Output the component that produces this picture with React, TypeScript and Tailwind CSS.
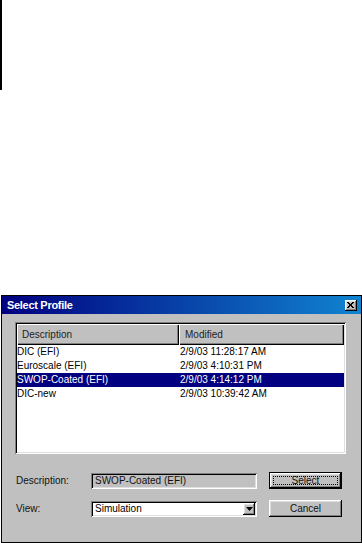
import React from 'react'

// Rows shown in the profile list
const PROFILES = [
  { name: 'DIC (EFI)', modified: '2/9/03 11:28:17 AM' },
  { name: 'Euroscale (EFI)', modified: '2/9/03 4:10:31 PM' },
  { name: 'SWOP-Coated (EFI)', modified: '2/9/03 4:14:12 PM' },
  { name: 'DIC-new', modified: '2/9/03 10:39:42 AM' },
]

const SELECTED = 2

const raised =
  'shadow-[inset_-1px_-1px_0_#000,inset_1px_1px_0_#fff,inset_-2px_-2px_0_#808080,inset_2px_2px_0_#dfdfdf]'
const sunken =
  'shadow-[inset_1px_1px_0_#808080,inset_-1px_-1px_0_#fff,inset_2px_2px_0_#000,inset_-2px_-2px_0_#dfdfdf]'

function HeaderCell({ label, className = '' }: { label: string; className?: string }) {
  return (
    <div
      className={`h-full flex items-center bg-[#c0c0c0] text-[#222] shadow-[inset_1px_1px_0_#fff,inset_-1px_-1px_0_#000,inset_-2px_-2px_0_#808080] ${className}`}
    >
      {label}
    </div>
  )
}

function Button({ label, isDefault = false }: { label: string; isDefault?: boolean }) {
  if (isDefault) {
    return (
      <div className="w-[73px] h-[17px] border border-black bg-[#c0c0c0]">
        <div className={`w-full h-full p-[3px] ${raised}`}>
          <div className="w-full h-full border border-dotted border-black flex items-center justify-center text-[#111]">
            {label}
          </div>
        </div>
      </div>
    )
  }
  return (
    <div className={`w-[73px] h-[17px] bg-[#c0c0c0] flex items-center justify-center text-[#111] ${raised}`}>
      {label}
    </div>
  )
}

export default function App() {
  return (
    <div
      className="w-[362px] h-[543px] bg-white overflow-hidden text-[10px] leading-none"
      style={{ fontFamily: '"Liberation Sans", Arial, sans-serif' }}
    >
      <div className="w-[2px] h-[90px] bg-black" />

      {/* Dialog */}
      <div className="mt-[205px] ml-[1px] w-[361px] h-[248px] border border-black bg-[#c0c0c0]">
        {/* Title bar */}
        <div className="h-[18px] flex items-center justify-between bg-[linear-gradient(to_right,#000080,#1084d0)]">
          <span className="pl-[5px] text-white font-bold text-[11px] tracking-[-0.3px]">
            Select Profile
          </span>
          <div className={`mr-[4px] w-[12px] h-[11px] bg-[#c0c0c0] flex items-center justify-center ${raised}`}>
            <svg width="7" height="6" viewBox="0 0 7 6" className="-mt-[1px] -ml-[1px]">
              <path d="M0 0L6 6M1 0L7 6M6 0L0 6M7 0L1 6" stroke="#000" strokeWidth="1" />
            </svg>
          </div>
        </div>

        <div className="pl-[13px] pt-[8px]">
          {/* List view */}
          <div className={`w-[331px] h-[132px] bg-white p-[2px] ${sunken}`}>
            <div className="h-[21px] flex">
              <HeaderCell label="Description" className="w-[162px] pl-[5px]" />
              <HeaderCell label="Modified" className="flex-1 pl-[6px]" />
            </div>
            {PROFILES.map((p, i) => (
              <div
                key={p.name}
                className={`h-[14px] flex items-center ${
                  i === SELECTED ? 'bg-[#000080] text-white' : 'text-black'
                }`}
              >
                <div className="w-[162px]">{p.name}</div>
                <div className="pl-[1px]">{p.modified}</div>
              </div>
            ))}
          </div>

          {/* Description row */}
          <div className="mt-[18px] h-[17px] flex items-center">
            <div className="w-[76px] pl-[1px] text-[#111]">Description:</div>
            <div className={`w-[166px] h-[16px] flex items-center pl-[4px] bg-[#c0c0c0] text-[#111] ${sunken}`}>
              SWOP-Coated (EFI)
            </div>
            <div className="ml-[12px]">
              <Button label="Select" isDefault />
            </div>
          </div>

          {/* View row */}
          <div className="mt-[11px] h-[17px] flex items-center">
            <div className="w-[76px] pl-[1px] text-[#111]">View:</div>
            <div className={`w-[166px] h-[16px] flex items-center justify-between p-[2px] bg-white ${sunken}`}>
              <span className="pl-[2px] text-black">Simulation</span>
              <div className={`w-[12px] h-[12px] bg-[#c0c0c0] flex items-center justify-center ${raised}`}>
                <svg width="7" height="4" viewBox="0 0 7 4">
                  <path d="M0 0H7L3.5 4Z" fill="#000" />
                </svg>
              </div>
            </div>
            <div className="ml-[12px]">
              <Button label="Cancel" />
            </div>
          </div>
        </div>
      </div>
    </div>
  )
}
